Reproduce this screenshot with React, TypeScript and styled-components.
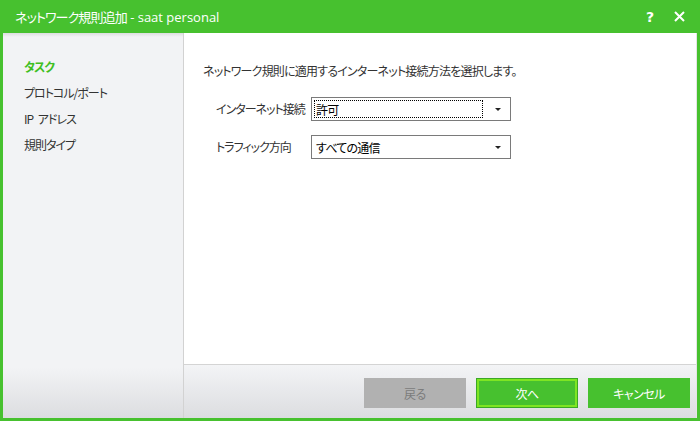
import React, { FC } from 'react';
import styled, { createGlobalStyle } from 'styled-components';

const green = '#47c12f';
const font = '"Noto Sans CJK JP", "Noto Sans", "Liberation Sans", sans-serif';

const GlobalStyle = createGlobalStyle`
    html, body {
        margin: 0;
        padding: 0;
        width: 700px;
        height: 421px;
        overflow: hidden;
        font-family: ${font};
        font-feature-settings: "palt";
        background: #ffffff;
    }
`;

const Window = styled.div`
    display: flex;
    flex-direction: column;
    width: 700px;
    height: 421px;
    background: ${green};
`;

const Titlebar = styled.div`
    display: flex;
    align-items: center;
    justify-content: space-between;
    height: 33px;
    padding: 0 14px 0 15px;
    color: #ffffff;
    font-size: 13px;
    box-sizing: border-box;
`;

const Title = styled.div`
    line-height: 33px;
    white-space: nowrap;
    letter-spacing: -0.9px;
`;

const Latin = styled.span`
    letter-spacing: 0;
    font-family: "Open Sans", "Noto Sans", sans-serif;
`;

const Controls = styled.div`
    display: flex;
    gap: 15px;
    align-items: center;
`;

const ControlItem = styled.div`
    width: 14px;
    height: 14px;
    display: flex;
    align-items: center;
    justify-content: center;
    font-weight: bold;
    font-size: 14px;
    font-family: "DejaVu Sans", sans-serif;
`;

const Body = styled.div`
    flex: 1;
    display: flex;
    margin: 0 3px 3px 3px;
    background: #ffffff;
    min-height: 0;
`;

const Sidebar = styled.div`
    width: 181px;
    flex-shrink: 0;
    border-right: 1px solid #d2d2d2;
    padding: 21px 0 0 21px;
    box-sizing: border-box;
    background:
        linear-gradient(to bottom, rgba(0, 0, 0, 0.09), rgba(0, 0, 0, 0) 4px),
        linear-gradient(to bottom, #f2f3f5 0%, #f2f3f5 87%, #dcdde0 100%);
`;

const NavItem = styled.div<{ $active?: boolean }>`
    line-height: 26px;
    font-size: 12px;
    letter-spacing: -1px;
    word-spacing: 3px;
    white-space: pre;
    color: ${p => (p.$active ? '#3fbf22' : '#333333')};
    font-weight: ${p => (p.$active ? 'bold' : 'normal')};
`;

const Main = styled.div`
    flex: 1;
    display: flex;
    flex-direction: column;
    border-right: 1px solid #e4e4e4;
`;

const Content = styled.div`
    flex: 1;
    padding: 30px 0 0 19px;
    font-size: 12px;
    letter-spacing: -0.8px;
    color: #333333;
`;

const Heading = styled.div`
    line-height: 16px;
    white-space: nowrap;
`;

const Form = styled.div`
    display: flex;
    flex-direction: column;
    gap: 14px;
    margin: 18px 0 0 13px;
`;

const Row = styled.div`
    display: flex;
    align-items: center;
`;

const Label = styled.div`
    width: 95px;
    flex-shrink: 0;
    line-height: 16px;
    white-space: nowrap;
    letter-spacing: -1px;
`;

const Select = styled.div`
    width: 200px;
    height: 24px;
    flex-shrink: 0;
    box-sizing: border-box;
    border: 1px solid #7a7a7a;
    background: #ffffff;
    display: flex;
    align-items: center;
    padding: 0 4px;
    font-size: 12px;
    color: #000000;
`;

const SelectValue = styled.div<{ $focused?: boolean }>`
    flex: 1;
    height: 18px;
    line-height: 17px;
    padding-left: 1px;
    margin-right: 12px;
    margin-left: -2px;
    box-sizing: border-box;
    white-space: nowrap;
    border: 1px dotted ${p => (p.$focused ? '#000000' : 'transparent')};
`;

const Arrow = styled.div`
    width: 0;
    height: 0;
    border-left: 3.5px solid transparent;
    border-right: 3.5px solid transparent;
    border-top: 3px solid #222222;
    margin-right: 5px;
`;

const Footer = styled.div`
    height: 54px;
    box-sizing: border-box;
    border-top: 1px solid #d4d4d4;
    display: flex;
    justify-content: flex-end;
    align-items: flex-start;
    gap: 10px;
    padding: 13px 6px 0 0;
    background: linear-gradient(to bottom, #f3f4f6, #dcdde0);
`;

const Button = styled.div<{ $variant: 'disabled' | 'primary' | 'default' }>`
    width: 102px;
    height: 30px;
    box-sizing: border-box;
    display: flex;
    align-items: center;
    justify-content: center;
    font-size: 12px;
    letter-spacing: -0.5px;
    background: ${p => (p.$variant === 'disabled' ? '#b1b1b1' : green)};
    color: ${p => (p.$variant === 'disabled' ? '#7c7c7c' : '#ffffff')};
    border: ${p => (p.$variant === 'primary' ? '1px solid #3aa826' : 'none')};
    box-shadow: ${p => (p.$variant === 'primary' ? 'inset 0 0 0 2px #7ee523' : 'none')};
`;

const navItems = ['タスク', 'プロトコル/ポート', 'IP アドレス', '規則タイプ'];

const App: FC = () => (
    <>
        <GlobalStyle />
        <Window>
            <Titlebar>
                <Title>
                    ネットワーク規則追加<Latin> - saat personal</Latin>
                </Title>
                <Controls>
                    <ControlItem>?</ControlItem>
                    <ControlItem>
                        <svg width="11" height="11" viewBox="0 0 11 11">
                            <path d="M1 1 L10 10 M10 1 L1 10" stroke="#ffffff" strokeWidth="2" />
                        </svg>
                    </ControlItem>
                </Controls>
            </Titlebar>
            <Body>
                <Sidebar>
                    {navItems.map((item, i) => (
                        <NavItem key={item} $active={i === 0}>
                            {item}
                        </NavItem>
                    ))}
                </Sidebar>
                <Main>
                    <Content>
                        <Heading>ネットワーク規則に適用するインターネット接続方法を選択します。</Heading>
                        <Form>
                            <Row>
                                <Label>インターネット接続</Label>
                                <Select>
                                    <SelectValue $focused>許可</SelectValue>
                                    <Arrow />
                                </Select>
                            </Row>
                            <Row>
                                <Label>トラフィック方向</Label>
                                <Select>
                                    <SelectValue>すべての通信</SelectValue>
                                    <Arrow />
                                </Select>
                            </Row>
                        </Form>
                    </Content>
                    <Footer>
                        <Button $variant="disabled">戻る</Button>
                        <Button $variant="primary">次へ</Button>
                        <Button $variant="default">キャンセル</Button>
                    </Footer>
                </Main>
            </Body>
        </Window>
    </>
);

export default App;
